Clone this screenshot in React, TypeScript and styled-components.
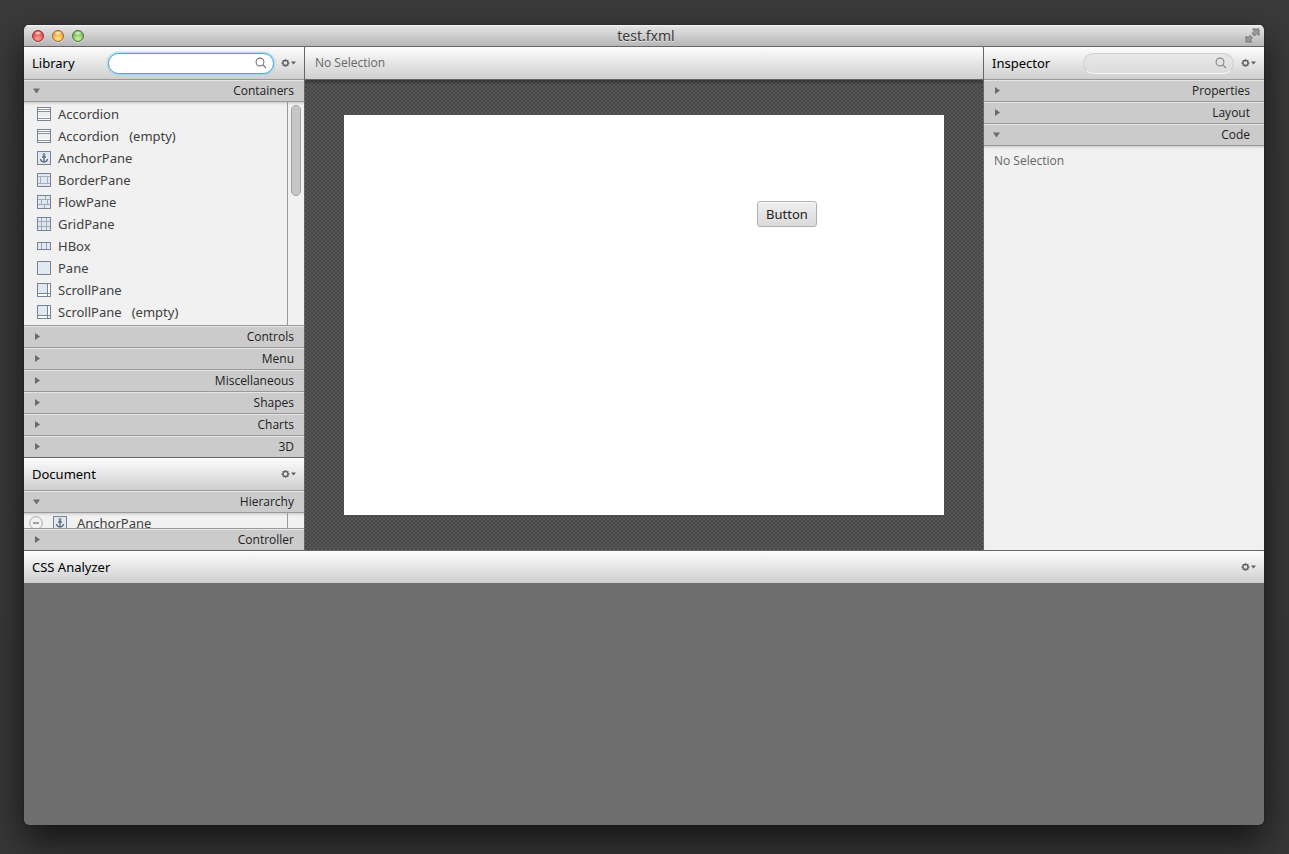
import React from "react";
import styled, { createGlobalStyle, css } from "styled-components";

const Global = createGlobalStyle`
  * { box-sizing: border-box; }
  html, body, #root { height: 100%; }
  body {
    margin: 0;
    background: #383838;
    color: #222;
    font: 13px/22px "Noto Sans", "Open Sans", sans-serif;
  }
  button, input { font: inherit; color: inherit; }
  ul { list-style: none; margin: 0; padding: 0; }
`;

const Desktop = styled.div`
  display: flex;
  min-height: 100%;
  padding: 25px 25px 29px 24px;
  background: linear-gradient(#3a3a3a, #373737);
`;

const Window = styled.main`
  flex: 1;
  min-width: 0;
  display: flex;
  flex-direction: column;
  overflow: hidden;
  border-radius: 5px;
  background: #6e6e6e;
  box-shadow: 0 0 1px #000, 0 16px 36px rgba(0, 0, 0, 0.65);
`;

const TitleBar = styled.header`
  display: grid;
  grid-template-columns: 1fr auto 1fr;
  align-items: center;
  height: 22px;
  padding: 0 4px 0 8px;
  border-bottom: 1px solid #666;
  background: linear-gradient(#e6e6e6, #b6b6b6);
  box-shadow: inset 0 1px #f4f4f4;
`;

const Title = styled.h1`
  margin: 0;
  font-size: 14px;
  font-weight: 400;
  line-height: 20px;
  color: #3a3a3a;
  text-shadow: 0 1px #e4e4e4;
`;

const Lights = styled.div`
  display: flex;
  gap: 8px;
`;

const Light = styled.button<{ $deep: string; $mid: string; $glow: string }>`
  width: 12px;
  height: 12px;
  padding: 0;
  border: 1px solid ${(p) => p.$deep};
  border-radius: 50%;
  background:
    radial-gradient(ellipse 4px 2px at 50% 20%, rgba(255, 255, 255, 0.9), rgba(255, 255, 255, 0) 100%),
    radial-gradient(circle at 50% 80%, ${(p) => p.$glow}, ${(p) => p.$mid} 70%);
  box-shadow: 0 1px rgba(255, 255, 255, 0.5);
`;

const PlainButton = styled.button`
  display: flex;
  align-items: center;
  padding: 0;
  border: 0;
  background: none;
`;

const ExpandButton = styled(PlainButton)`
  justify-self: end;
`;

const Workspace = styled.div`
  display: grid;
  grid-template-columns: 281px minmax(0, 1fr) 281px;
  border-bottom: 1px solid #666;
`;

const Column = styled.aside<{ $side: "left" | "right" }>`
  display: flex;
  flex-direction: column;
  background: #f1f1f1;
  ${(p) => (p.$side === "left" ? "border-right" : "border-left")}: 1px solid #666;
`;

const PanelBar = styled.div<{ $edge?: string }>`
  display: flex;
  align-items: center;
  height: ${(p) => (p.$edge ? 33 : 32)}px;
  padding: 0 7px 0 8px;
  ${(p) => p.$edge && css`border-bottom: 1px solid ${p.$edge};`}
  background: linear-gradient(#fdfdfd, #cfcfcf);
`;

const PanelTitle = styled.h2`
  flex: 1;
  margin: 0;
  font-size: 13px;
  font-weight: 400;
  color: #000;
`;

const SelectionText = styled.p`
  margin: 0 2px;
  font-family: "Open Sans", "Noto Sans", sans-serif;
  font-size: 12px;
  color: #666;
`;

const SearchBox = styled.label<{ $active?: boolean }>`
  display: flex;
  align-items: center;
  width: ${(p) => (p.$active ? 166 : 151)}px;
  height: 21px;
  padding: 0 6px 0 10px;
  margin-right: 7px;
  border-radius: 11px;
  ${(p) =>
    p.$active
      ? css`
          border: 1px solid #4ba6d6;
          background: #fff;
          box-shadow: 0 0 2px 1px #a5d4ec;
        `
      : css`
          border: 1px solid #d0d0d0;
          border-bottom-color: #f4f4f4;
          background: linear-gradient(#e8e8e8, #dcdcdc);
        `}
  input {
    flex: 1;
    min-width: 0;
    padding: 0;
    border: 0;
    outline: 0;
    background: none;
    font-size: 12px;
    line-height: 16px;
  }
`;

const Section = styled.button<{ $edge?: string }>`
  display: flex;
  align-items: center;
  justify-content: space-between;
  flex: none;
  width: 100%;
  height: ${(p) => (p.$edge === "none" ? 21 : 22)}px;
  padding: 0 10px 0 8px;
  border: 0;
  ${(p) => p.$edge !== "none" && css`border-bottom: 1px solid ${p.$edge ?? "#999"};`}
  background: #cbcbcb;
  box-shadow: inset 0 1px #e6e6e6;
  font-family: "Open Sans", "Noto Sans", sans-serif;
  font-size: 12px;
  line-height: 20px;
  color: #222;
`;

const InspectorSection = styled(Section)`
  padding-right: 14px;
`;

const ListPane = styled.div<{ $height: number }>`
  display: flex;
  height: ${(p) => p.$height}px;
  overflow: hidden;
  border-bottom: 1px solid #999;
  background: #f1f1f1;
  box-shadow: inset 0 3px 3px -2px #c4c4c4;
`;

const Items = styled.ul`
  flex: 1;
  padding-top: 1px;
`;

const Item = styled.li`
  display: flex;
  align-items: center;
  gap: 7px;
  height: 22px;
  padding-left: 13px;
  color: #404040;
  white-space: pre;
`;

const TreeItem = styled(Item)`
  gap: 10px;
  height: 18px;
  padding-left: 5px;
`;

const ScrollTrack = styled.div`
  width: 17px;
  padding: 3px;
  border-left: 1px solid #999;
`;

const ScrollThumb = styled.div`
  width: 10px;
  height: 91px;
  border: 1px solid #a2a2a2;
  border-radius: 5px;
  background: #c6c6c6;
`;

const Center = styled.section`
  display: flex;
  flex-direction: column;
`;

const Stage = styled.div`
  flex: 1;
  display: flex;
  align-items: center;
  justify-content: center;
  background:
    linear-gradient(rgba(0, 0, 0, 0.3), rgba(0, 0, 0, 0) 5px),
    conic-gradient(#474747 25%, #575757 0 50%, #474747 0 75%, #575757 0) 0 0 / 4px 4px;
`;

const Canvas = styled.div`
  position: relative;
  width: 600px;
  height: 400px;
  background: #fff;
`;

const CanvasButton = styled.button`
  position: absolute;
  left: 413px;
  top: 86px;
  width: 60px;
  height: 26px;
  padding: 0;
  border: 1px solid #b0b0b0;
  border-radius: 3px;
  background: linear-gradient(#efefef, #dadada);
  box-shadow: inset 0 1px #fafafa;
  font-size: 13px;
  line-height: 22px;
`;

const InspectorBody = styled.div`
  flex: 1;
  padding: 4px 8px;
  box-shadow: inset 0 3px 3px -2px #c4c4c4;
`;

const Triangle = ({ open }: { open?: boolean }) => (
  <svg width="9" height="9" viewBox="0 0 9 9" fill="#6c6c6c" aria-hidden="true">
    <path d={open ? "M1 2.500h7L4.500 7.500z" : "M3 1l5 3.500L3 8z"} />
  </svg>
);

const Magnifier = ({ color }: { color: string }) => (
  <svg width="12" height="12" viewBox="0 0 12 12" fill="none" stroke={color} strokeWidth="1.100" aria-hidden="true">
    <circle cx="5" cy="5" r="3.900" />
    <path d="M8 8l3 3" />
  </svg>
);

const GearMenu = ({ label }: { label: string }) => (
  <PlainButton aria-label={label}>
    <svg width="16" height="10" viewBox="0 0 16 10">
      <g stroke="#666" fill="none">
        <circle cx="4.500" cy="5" r="2.500" strokeWidth="1.400" />
        <path d="M4.500 1v1.400M4.500 7.600V9M.5 5h1.400M7.100 5h1.400M1.700 2.200l1 1M6.300 6.800l1 1M1.700 7.800l1-1M6.300 3.200l1-1" strokeWidth="1.300" />
      </g>
      <path d="M10 3.500h5L12.500 6.500z" fill="#5c5c5c" />
    </svg>
  </PlainButton>
);

type IconKind = "accordion" | "anchor" | "border" | "flow" | "grid" | "hbox" | "pane" | "scroll";

const inner: Record<IconKind, React.ReactNode> = {
  accordion: (
    <>
      <path d="M1 1h12v4H1zM1 10h12v3H1z" fill="#fff" />
      <path d="M1 2.500h12M1 4.500h12M1 11.500h12" stroke="#8a929c" />
    </>
  ),
  anchor: (
    <g stroke="#5d6878" fill="none">
      <circle cx="7" cy="3.500" r="1" />
      <path d="M7 4.500V11M5 6h4M3.500 8c.3 2 1.700 3 3.500 3s3.200-1 3.500-3" strokeWidth="1.300" />
    </g>
  ),
  border: <path d="M1 3.500h12M1 10.500h12M3.500 3.500v7M10.500 3.500v7" stroke="#a3b0c0" fill="none" />,
  flow: <path d="M1 4.500h12M1 9.500h12M8.500 1v3.500M4.500 4.500v5M10.500 4.500v5M7.500 9.500V13" stroke="#a0abb8" fill="none" />,
  grid: <path d="M1 4.500h12M1 9.500h12M4.500 1v12M9.500 1v12" stroke="#a0abb8" fill="none" />,
  hbox: <path d="M4.500 4v6M9.500 4v6" stroke="#98a4b2" fill="none" />,
  pane: null,
  scroll: (
    <>
      <path d="M10 1h3v12H1v-3h9z" fill="#fff" />
      <path d="M10.500 1v12M1 10.500h12" stroke="#7a8592" fill="none" />
    </>
  ),
};

const NodeIcon = ({ kind }: { kind: IconKind }) => (
  <svg width="14" height="14" viewBox="0 0 14 14" shapeRendering={kind === "anchor" ? "auto" : "crispEdges"} aria-hidden="true">
    <rect
      x=".5"
      y={kind === "hbox" ? 3.5 : 0.5}
      width="13"
      height={kind === "hbox" ? 7 : 13}
      fill={kind === "accordion" ? "#eee" : "#e1e8f2"}
      stroke="#778394"
    />
    {inner[kind]}
  </svg>
);

const RootMarker = () => (
  <svg width="14" height="14" viewBox="0 0 14 14" fill="none" aria-hidden="true">
    <circle cx="7" cy="7" r="6.300" stroke="#aaa" />
    <path d="M4 7h6" stroke="#888" strokeWidth="1.500" />
  </svg>
);

const containers: [IconKind, string][] = [
  ["accordion", "Accordion"],
  ["accordion", "Accordion   (empty)"],
  ["anchor", "AnchorPane"],
  ["border", "BorderPane"],
  ["flow", "FlowPane"],
  ["grid", "GridPane"],
  ["hbox", "HBox"],
  ["pane", "Pane"],
  ["scroll", "ScrollPane"],
  ["scroll", "ScrollPane   (empty)"],
];

const closedSections = ["Controls", "Menu", "Miscellaneous", "Shapes", "Charts", "3D"];

export default function App() {
  return (
    <>
      <Global />
      <Desktop>
        <Window>
          <TitleBar>
            <Lights>
              <Light aria-label="Close" $deep="#8c3431" $mid="#dc4a48" $glow="#ff9f98" />
              <Light aria-label="Minimize" $deep="#99692a" $mid="#eea63c" $glow="#ffe58c" />
              <Light aria-label="Zoom" $deep="#4b7636" $mid="#79b85a" $glow="#cdf3a4" />
            </Lights>
            <Title>test.fxml</Title>
            <ExpandButton aria-label="Full screen">
              <svg width="15" height="15" viewBox="0 0 15 15" fill="#999" stroke="#666" strokeWidth=".8">
                <path d="M7.500 1H14v6.500l-2-2L9.500 8 7 5.500 9.500 3zM7 14H1V8l1.800 1.800L5 7.500 7.500 10 5.200 12.200z" />
              </svg>
            </ExpandButton>
          </TitleBar>
          <Workspace>
            <Column $side="left">
              <PanelBar $edge="#999">
                <PanelTitle>Library</PanelTitle>
                <SearchBox $active>
                  <input type="text" aria-label="Search library" />
                  <Magnifier color="#777" />
                </SearchBox>
                <GearMenu label="Library options" />
              </PanelBar>
              <Section aria-expanded="true"><Triangle open />Containers</Section>
              <ListPane $height={224}>
                <Items>
                  {containers.map(([kind, name]) => (
                    <Item key={name}><NodeIcon kind={kind} />{name}</Item>
                  ))}
                </Items>
                <ScrollTrack><ScrollThumb /></ScrollTrack>
              </ListPane>
              {closedSections.map((name) => (
                <Section key={name} $edge={name === "3D" ? "#666" : undefined} aria-expanded="false">
                  <Triangle />{name}
                </Section>
              ))}
              <PanelBar $edge="#999">
                <PanelTitle>Document</PanelTitle>
                <GearMenu label="Document options" />
              </PanelBar>
              <Section aria-expanded="true"><Triangle open />Hierarchy</Section>
              <ListPane $height={16}>
                <Items>
                  <TreeItem><RootMarker /><NodeIcon kind="anchor" />AnchorPane</TreeItem>
                </Items>
                <ScrollTrack />
              </ListPane>
              <Section $edge="none" aria-expanded="false"><Triangle />Controller</Section>
            </Column>
            <Center>
              <PanelBar $edge="#666"><SelectionText>No Selection</SelectionText></PanelBar>
              <Stage>
                <Canvas><CanvasButton>Button</CanvasButton></Canvas>
              </Stage>
            </Center>
            <Column $side="right">
              <PanelBar $edge="#999">
                <PanelTitle>Inspector</PanelTitle>
                <SearchBox>
                  <input type="text" aria-label="Search inspector" />
                  <Magnifier color="#888" />
                </SearchBox>
                <GearMenu label="Inspector options" />
              </PanelBar>
              <InspectorSection aria-expanded="false"><Triangle />Properties</InspectorSection>
              <InspectorSection aria-expanded="false"><Triangle />Layout</InspectorSection>
              <InspectorSection aria-expanded="true"><Triangle open />Code</InspectorSection>
              <InspectorBody><SelectionText>No Selection</SelectionText></InspectorBody>
            </Column>
          </Workspace>
          <PanelBar>
            <PanelTitle>CSS Analyzer</PanelTitle>
            <GearMenu label="CSS Analyzer options" />
          </PanelBar>
        </Window>
      </Desktop>
    </>
  );
}
